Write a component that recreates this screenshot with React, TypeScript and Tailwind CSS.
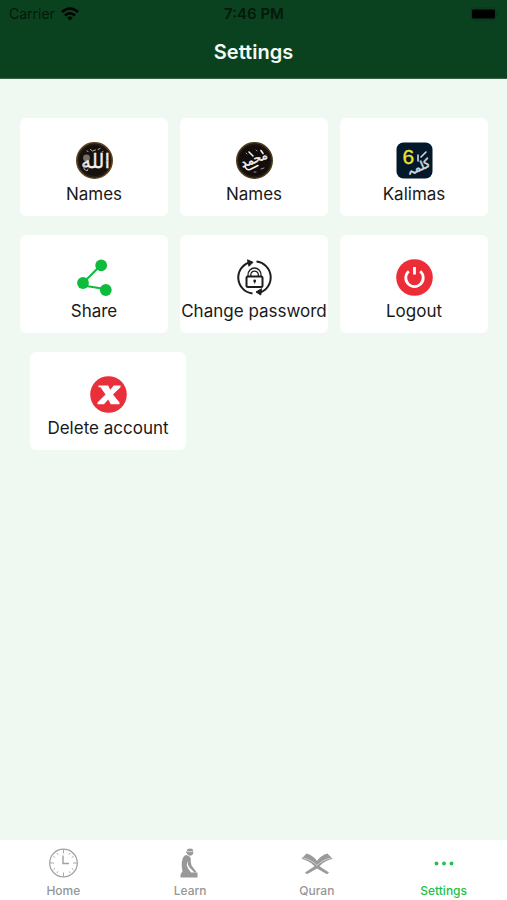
import type { ReactNode } from 'react';

function AllahIcon() {
  return (
    <svg viewBox="0 0 37 37" className="size-[37px]" aria-hidden="true">
      <circle cx="18.5" cy="18.5" r="17.7" fill="#17110d" stroke="#5c4526" strokeWidth="1.6" />
      <circle cx="18.5" cy="18.5" r="16.2" fill="none" stroke="#2d2114" strokeWidth="1" />
      <circle cx="10.5" cy="16" r="3.4" fill="#77706a" />
      <text x="19.5" y="26" textAnchor="middle" fontSize="20" fontFamily="DejaVu Sans, sans-serif" fill="#f1eeea" stroke="#f1eeea" strokeWidth=".3">الله</text>
      <g stroke="#b8b1a8" strokeWidth="1" strokeLinecap="round" fill="none">
        <path d="M11 9l1 .4M14.5 7.5l2 1.5 3-1M22 7.500l2-1M26 10l1-.5M8 23v4l3 2 1-2M30 20l2-2" />
      </g>
    </svg>
  );
}

function MuhammadIcon() {
  return (
    <svg viewBox="0 0 37 37" className="size-[37px]" aria-hidden="true">
      <circle cx="18.5" cy="18.5" r="17.7" fill="#130e0b" stroke="#4b3d1f" strokeWidth="1.6" />
      <circle cx="18.5" cy="18.5" r="16.2" fill="none" stroke="#291d12" strokeWidth="1" />
      <text x="18.5" y="21" textAnchor="middle" fontSize="12" fontFamily="DejaVu Sans, sans-serif" fill="#f4f0ec" stroke="#f4f0ec" strokeWidth=".5" transform="rotate(-20 18.5 18.5)">محمد</text>
      <g stroke="#f4f0ec" strokeWidth="1.6" strokeLinecap="round" fill="none">
        <path d="M9 24q1 4.500 5 3.500l8-4M25 8.500l2 3M13 10l4 4" />
      </g>
      <g stroke="#9b928a" strokeWidth="1" strokeLinecap="round" fill="none">
        <path d="M10 11l1 1M20 8l1 1M29 14l1-1M25 27l3-1M18 30h2" />
      </g>
    </svg>
  );
}

function KalimasIcon() {
  return (
    <svg viewBox="0 0 37 37" className="size-[37px]" aria-hidden="true">
      <rect x=".5" y=".5" width="36" height="36" rx="7" fill="#03192b" />
      <text x="6.500" y="22" fontSize="21" fontFamily="Liberation Sans, sans-serif" fill="#f2e32d" stroke="#f2e32d" strokeWidth=".3">6</text>
      <text x="23" y="29" textAnchor="middle" fontSize="12" fontFamily="DejaVu Sans, sans-serif" fill="#cfd9e2" stroke="#cfd9e2" strokeWidth=".6" transform="rotate(-24 23 26)">كلمہ</text>
      <path d="M22 13v6M30 10l-5 5" fill="none" stroke="#cfd9e2" strokeWidth="1.6" strokeLinecap="round" />
    </svg>
  );
}

function ShareIcon() {
  return (
    <svg viewBox="0 0 37 37" className="size-[37px]" aria-hidden="true" fill="#0dbc3d">
      <path d="M25 6L7 24M7 26.500L29 30" stroke="#0dbc3d" strokeWidth="2" />
      <circle cx="25.200" cy="6.300" r="5.900" />
      <circle cx="7" cy="24" r="5.900" />
      <circle cx="29.800" cy="31" r="5.900" />
    </svg>
  );
}

function PasswordIcon() {
  return (
    <svg viewBox="0 0 37 37" className="size-[37px]" aria-hidden="true" fill="none" stroke="#1d1d1d" strokeWidth="2">
      <path d="M13 3.500A16 16 0 0 0 16.500 34.500" />
      <path d="M20.500 2.500A16 16 0 0 1 24 33.500" />
      <path d="M11.500 .8l5.500 2.500-4 4zM25.500 29.700l-5.500 3.300 4.800 3z" fill="#1d1d1d" strokeWidth="1" />
      <rect x="10.500" y="17.500" width="16" height="10.500" rx="1.500" />
      <path d="M12 17.500v-1.500a6.500 7 0 0 1 13 0v1.500M14.800 17v-1.500a3.800 4 0 0 1 7.500 0V17" strokeWidth="1.300" />
      <circle cx="18.700" cy="22" r="1.400" fill="#1d1d1d" stroke="none" />
      <path d="M18.700 22v2.500" strokeWidth="1" />
    </svg>
  );
}

function LogoutIcon() {
  return (
    <svg viewBox="0 0 37 37" className="size-[37px]" aria-hidden="true">
      <circle cx="18.500" cy="18.500" r="18.300" fill="#ec2c36" />
      <path d="M12.800 12.300a8.700 8.700 0 1 0 11.400 0" fill="none" stroke="#fff" strokeWidth="2.800" />
      <path d="M18.500 8v7.500" stroke="#fff" strokeWidth="2.800" />
    </svg>
  );
}

function DeleteIcon() {
  return (
    <svg viewBox="0 0 37 37" className="size-[37px]" aria-hidden="true">
      <circle cx="18.500" cy="18.500" r="18.300" fill="#e9303a" />
      <path d="M8.500 9.500h9.700l2 4.300 3.600-4.300h6.700v1.800l-7.500 7.200 6.500 8v1.800h-8.700l-2.600-4.800-4.200 4.800H7.500v-1.800l8-8-5-7.200h-2z" fill="#fff" />
    </svg>
  );
}

function HomeIcon() {
  return (
    <svg viewBox="0 0 30 30" className="size-[30px]" aria-hidden="true" fill="none" stroke="#a0a0a0" strokeWidth="1.200">
      <circle cx="15.500" cy="15" r="13.800" />
      <path d="M15 7.500v8h6" strokeWidth="1.400" />
      <path d="M15.500 1.500v4M15.500 24.500v4M2 15h4M25 15h4M9 5l1 1.700M22 5l-1 1.700M5.500 8.500l1.700 1M25.500 8.500l-1.700 1M5.500 21.500l1.700-1M25.500 21.500l-1.700-1M9 25l1-1.700M22 25l-1-1.700" strokeWidth=".9" />
    </svg>
  );
}

function LearnIcon() {
  return (
    <svg viewBox="0 0 30 30" className="size-[30px]" aria-hidden="true" fill="#989898">
      <path d="M12.500 1.300q3-1.600 5.700.5v4.200q-2 2.500-4.900 1.300L11 4.500z" />
      <path d="M11.500 7l3 1.500c1.500 1 1.500 3 1.200 5l.8 4 4.800 6.200-1.800.9-5-5.200-1.500-2.600-.4-4-.8 4.500 1.300 3.300 3 4H22.500v4.900H5.500v-3l2-3.200-.5-3c-.5-3-.5-7 1-10.500C8.700 8.200 10 7 11.500 7z" />
      <path d="M12 3.500l4 .3 2-1" fill="none" stroke="#fff" strokeWidth=".6" />
    </svg>
  );
}

function QuranIcon() {
  return (
    <svg viewBox="0 0 32 24" className="h-[30px] w-8" aria-hidden="true" fill="#9a9a9a">
      <path d="M5.500 2.500c4 1 8 3.500 10.500 7.500 2.500-4 6.500-6.500 10.500-7.500l5 5.300c-5 1.200-9.500 3.700-13 7.400l9.500 6.300-2 1.700L16 17.500l-10 5.700-2-1.700 9.500-6.300C10 11.500 5.500 9 .5 7.800z" />
      <path d="M2.500 7.200c5.500 1 10 3.600 13.500 7.300 3.500-3.700 8-6.300 13.500-7.300" fill="none" stroke="#dcdcdc" strokeWidth=".8" />
    </svg>
  );
}

function DotsIcon() {
  return (
    <svg viewBox="0 0 30 30" className="size-[30px]" aria-hidden="true" fill="#25c04c">
      <circle cx="7.500" cy="15.500" r="1.900" />
      <circle cx="15" cy="15.500" r="1.900" />
      <circle cx="22.500" cy="15.500" r="1.900" />
    </svg>
  );
}

function Card({ icon, label, inset = false }: { icon: ReactNode; label: string; inset?: boolean }) {
  return (
    <button
      type="button"
      className={`flex flex-col items-center rounded-md bg-white pt-6 pb-[10px] ${inset ? 'ml-[10px] -mr-[18px]' : ''}`}
    >
      {icon}
      <span className="mt-[3px] text-[17px] leading-6 whitespace-nowrap text-[#191919]">{label}</span>
    </button>
  );
}

function Tab({ icon, label, active = false }: { icon: ReactNode; label: string; active?: boolean }) {
  return (
    <a
      href="#"
      aria-current={active ? 'page' : undefined}
      className={`flex flex-1 flex-col items-center pt-2 text-xs font-medium ${active ? 'text-[#25c04c]' : 'text-[#969696]'}`}
    >
      {icon}
      <span className="mt-[5px]">{label}</span>
    </a>
  );
}

export default function App() {
  return (
    <div className="flex min-h-screen flex-col bg-[#f0f8f2] font-['Inter',sans-serif]">
      <header className="border-b border-[#386249] bg-[#0a421f]">
        <div className="grid h-7 grid-cols-3 items-center pr-2 pl-[9px] text-sm text-[#04180b]">
          <div className="flex items-center gap-[6px]">
            <span>Carrier</span>
            <svg viewBox="0 0 18 14" className="h-[14px] w-[18px]" aria-label="Wi-Fi" fill="none" stroke="#000" strokeWidth="2.600">
              <path d="M1 5q8-7 16 0M4 8.500q5-4.500 10 0" />
              <path d="M6.300 10.800q2.700-2.400 5.400 0L9 13.500z" fill="#000" stroke="none" />
            </svg>
          </div>
          <span className="text-center text-[15px] font-semibold whitespace-nowrap">7:46 PM</span>
          <svg viewBox="0 0 28 14" className="h-[14px] w-7 justify-self-end" aria-label="Battery">
            <rect x=".500" y="1" width="24.500" height="12" rx="3" fill="none" stroke="#07371a" />
            <rect x="1" y="2.500" width="23" height="9" rx="1.500" fill="#000" />
            <path d="M26.500 5v4" stroke="#07371a" strokeWidth="1.500" />
          </svg>
        </div>
        <h1 className="pt-[10px] pb-3 text-center text-xl leading-7 font-semibold text-[#f4faf5]">Settings</h1>
      </header>
      <main className="grid flex-1 grid-cols-3 content-start gap-x-3 gap-y-[19px] pt-[39px] pr-[19px] pl-5">
        <Card icon={<AllahIcon />} label="Names" />
        <Card icon={<MuhammadIcon />} label="Names" />
        <Card icon={<KalimasIcon />} label="Kalimas" />
        <Card icon={<ShareIcon />} label="Share" />
        <Card icon={<PasswordIcon />} label="Change password" />
        <Card icon={<LogoutIcon />} label="Logout" />
        <Card icon={<DeleteIcon />} label="Delete account" inset />
      </main>
      <nav className="flex h-[60px] bg-white">
        <Tab icon={<HomeIcon />} label="Home" />
        <Tab icon={<LearnIcon />} label="Learn" />
        <Tab icon={<QuranIcon />} label="Quran" />
        <Tab icon={<DotsIcon />} label="Settings" active />
      </nav>
    </div>
  );
}
